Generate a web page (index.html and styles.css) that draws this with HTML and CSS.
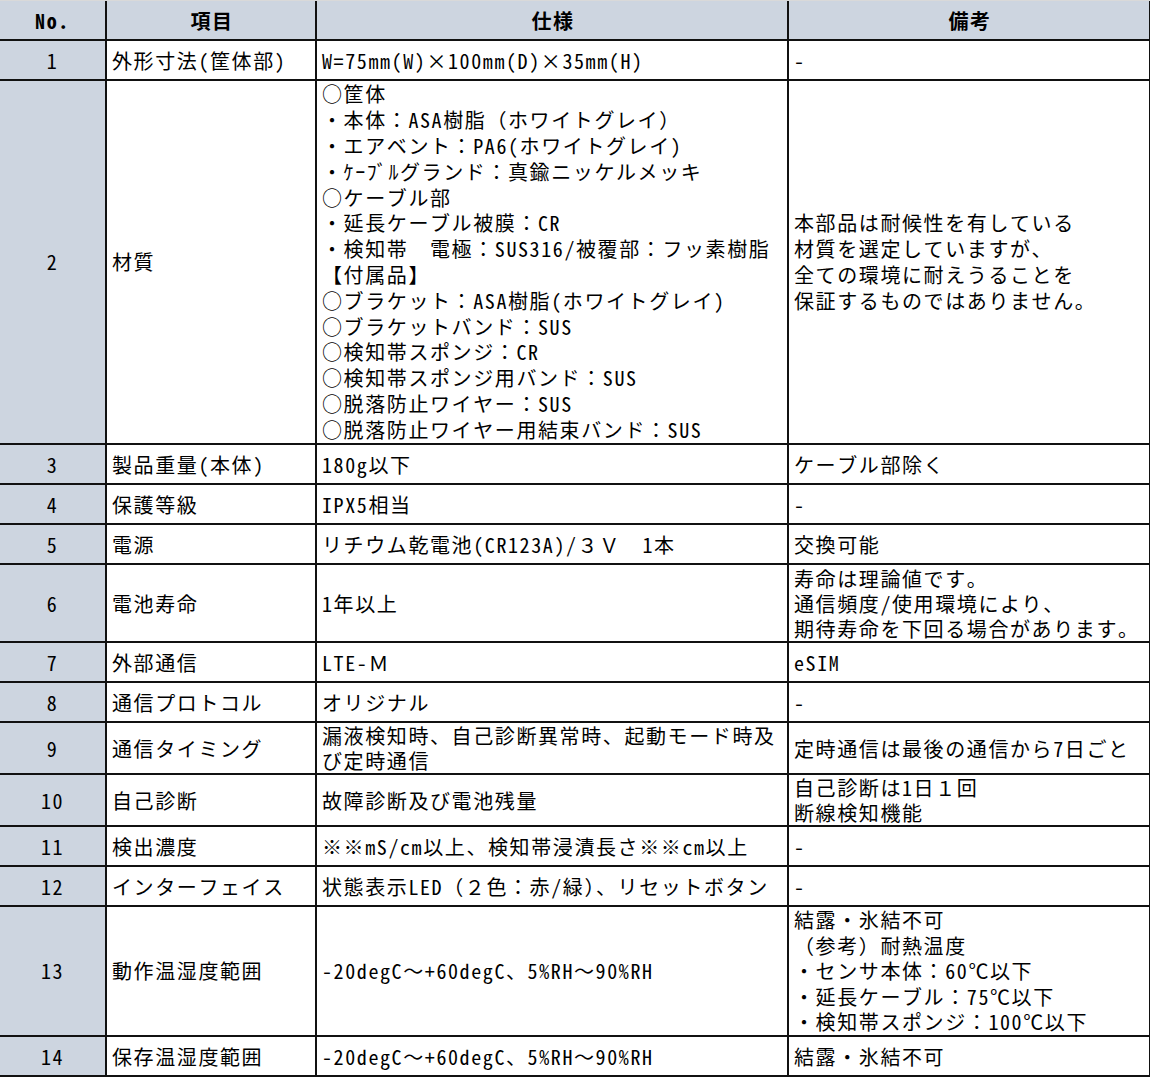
FILE: index.html
```html
<!DOCTYPE html>
<html lang="ja">
<head>
<meta charset="utf-8">
<title>仕様表</title>
<link rel="stylesheet" href="styles.css">
</head>
<body>
<table class="spec">
  <colgroup>
    <col class="c-no">
    <col class="c-item">
    <col class="c-spec">
    <col class="c-note">
  </colgroup>
  <thead>
    <tr class="h40">
      <th class="no">No.</th>
      <th>項目</th>
      <th>仕様</th>
      <th>備考</th>
    </tr>
  </thead>
  <tbody>
    <tr class="h40">
      <td class="no">1</td>
      <td>外形寸法(筐体部)</td>
      <td>W=75mm(W)×100mm(D)×35mm(H)</td>
      <td>-</td>
    </tr>
    <tr class="h364">
      <td class="no">2</td>
      <td>材質</td>
      <td>○筐体<br>・本体：ASA樹脂（ホワイトグレイ）<br>・エアベント：PA6(ホワイトグレイ)<br>・ｹｰﾌﾞﾙグランド：真鍮ニッケルメッキ<br>○ケーブル部<br>・延長ケーブル被膜：CR<br>・検知帯　電極：SUS316/被覆部：フッ素樹脂<br>【付属品】<br>○ブラケット：ASA樹脂(ホワイトグレイ)<br>○ブラケットバンド：SUS<br>○検知帯スポンジ：CR<br>○検知帯スポンジ用バンド：SUS<br>○脱落防止ワイヤー：SUS<br>○脱落防止ワイヤー用結束バンド：SUS</td>
      <td>本部品は耐候性を有している<br>材質を選定していますが、<br>全ての環境に耐えうることを<br>保証するものではありません。</td>
    </tr>
    <tr class="h40">
      <td class="no">3</td>
      <td>製品重量(本体)</td>
      <td>180g以下</td>
      <td>ケーブル部除く</td>
    </tr>
    <tr class="h40">
      <td class="no">4</td>
      <td>保護等級</td>
      <td>IPX5相当</td>
      <td>-</td>
    </tr>
    <tr class="h40">
      <td class="no">5</td>
      <td>電源</td>
      <td>リチウム乾電池(CR123A)/３Ｖ　1本</td>
      <td>交換可能</td>
    </tr>
    <tr class="h78">
      <td class="no">6</td>
      <td>電池寿命</td>
      <td>1年以上</td>
      <td>寿命は理論値です。<br>通信頻度/使用環境により、<br>期待寿命を下回る場合があります。</td>
    </tr>
    <tr class="h40">
      <td class="no">7</td>
      <td>外部通信</td>
      <td>LTE-Ｍ</td>
      <td>eSIM</td>
    </tr>
    <tr class="h40">
      <td class="no">8</td>
      <td>通信プロトコル</td>
      <td>オリジナル</td>
      <td>-</td>
    </tr>
    <tr class="h52">
      <td class="no">9</td>
      <td>通信タイミング</td>
      <td>漏液検知時、自己診断異常時、起動モード時及<br>び定時通信</td>
      <td>定時通信は最後の通信から7日ごと</td>
    </tr>
    <tr class="h52">
      <td class="no">10</td>
      <td>自己診断</td>
      <td>故障診断及び電池残量</td>
      <td>自己診断は1日１回<br>断線検知機能</td>
    </tr>
    <tr class="h40">
      <td class="no">11</td>
      <td>検出濃度</td>
      <td>※※mS/cm以上、検知帯浸漬長さ※※cm以上</td>
      <td>-</td>
    </tr>
    <tr class="h40">
      <td class="no">12</td>
      <td>インターフェイス</td>
      <td>状態表示LED（２色：赤/緑）、リセットボタン</td>
      <td>-</td>
    </tr>
    <tr class="h130">
      <td class="no">13</td>
      <td>動作温湿度範囲</td>
      <td>-20degC～+60degC、5%RH～90%RH</td>
      <td>結露・氷結不可<br>（参考）耐熱温度<br>・センサ本体：60℃以下<br>・延長ケーブル：75℃以下<br>・検知帯スポンジ：100℃以下</td>
    </tr>
    <tr class="h40">
      <td class="no">14</td>
      <td>保存温湿度範囲</td>
      <td>-20degC～+60degC、5%RH～90%RH</td>
      <td>結露・氷結不可</td>
    </tr>
  </tbody>
</table>
</body>
</html>
```

FILE: styles.css
```css
html, body {
  margin: 0;
  padding: 0;
  background: #ffffff;
}

body {
  font-family: "Noto Sans Mono CJK JP", "Noto Sans CJK JP", "DejaVu Sans Mono", monospace;
  font-size: 20px;
  letter-spacing: 1.6px;
  color: #000000;
  border-top: 1px solid #d9d9d9;
}

.spec {
  width: 1150px;
  border-collapse: collapse;
  table-layout: fixed;
}

.c-no { width: 106px; }
.c-item { width: 210px; }
.c-spec { width: 472px; }
.c-note { width: 362px; }

.spec th,
.spec td {
  border: 2px solid #111111;
  padding: 0 3px 0 5px;
  line-height: 25px;
  vertical-align: middle;
  text-align: left;
  white-space: nowrap;
  overflow: hidden;
  font-weight: 400;
}

.spec tr > :first-child {
  border-left: none;
}

.spec thead tr:first-child > * {
  border-top: none;
}

.spec th {
  background: #cdd5e0;
  text-align: center;
  font-weight: 700;
}

.spec .no {
  background: #cdd5e0;
  text-align: center;
  padding: 0;
}

.spec tr.h40 > * { height: 38px; }
.spec tr.h52 > * { height: 50px; }
.spec tr.h78 > * { height: 76px; }
.spec tr.h130 > * { height: 128px; line-height: 25.6px; }
.spec tr.h364 > * { height: 362px; line-height: 25.8px; }
```
